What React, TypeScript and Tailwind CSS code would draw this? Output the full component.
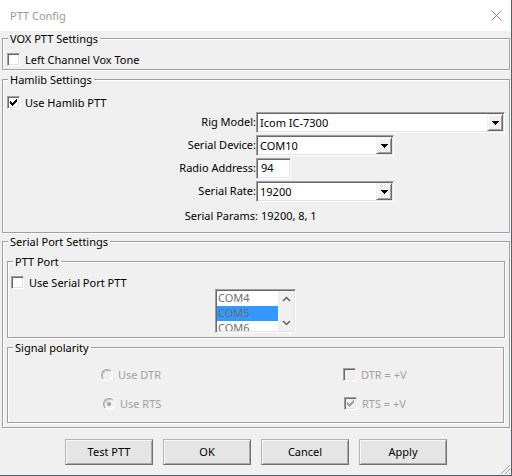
import React from "react";

const sunken =
  "border border-t-[#a0a0a0] border-l-[#a0a0a0] border-r-white border-b-white shadow-[inset_1px_1px_0_#696969,inset_-1px_-1px_0_#e3e3e3]";

function Group({
  label,
  className,
  children,
}: {
  label: string;
  className: string;
  children?: React.ReactNode;
}) {
  return (
    <div
      className={
        "relative border border-[#a0a0a0] shadow-[inset_1px_1px_0_#ffffff,1px_1px_0_#ffffff] " +
        className
      }
    >
      <span className="absolute left-[5px] top-[-8px] px-[2px] bg-[#f0f0f0] leading-[16px] whitespace-nowrap text-black">
        {label}
      </span>
      {children}
    </div>
  );
}

const checkPixels: [number, number, number][] = [
  [6, 0, 1],
  [5, 1, 2],
  [0, 2, 1],
  [4, 2, 3],
  [0, 3, 2],
  [3, 3, 3],
  [0, 4, 5],
  [1, 5, 3],
  [2, 6, 1],
];

function Check({ checked = false, disabled = false }: { checked?: boolean; disabled?: boolean }) {
  return (
    <span
      className={`relative block w-[13px] h-[13px] shrink-0 ${sunken} ${
        disabled ? "bg-[#f0f0f0]" : "bg-white"
      }`}
    >
      {checked && (
        <svg
          className="absolute left-[2px] top-[2px]"
          width="7"
          height="7"
          viewBox="0 0 7 7"
          shapeRendering="crispEdges"
        >
          {checkPixels.map(([x, y, w], i) => (
            <rect key={i} x={x} y={y} width={w} height={1} fill={disabled ? "#a0a0a0" : "#000000"} />
          ))}
        </svg>
      )}
    </span>
  );
}

function Radio({ checked = false }: { checked?: boolean }) {
  return (
    <span className="relative block w-[12px] h-[12px] shrink-0 rounded-full border border-t-[#a0a0a0] border-l-[#a0a0a0] border-r-white border-b-white shadow-[inset_1px_1px_0_#c4c4c4] bg-[#f0f0f0]">
      {checked && (
        <span className="absolute left-[3px] top-[3px] w-[4px] h-[4px] rounded-full bg-[#a0a0a0]" />
      )}
    </span>
  );
}

function DropButton() {
  return (
    <div className="w-[16px] h-full flex items-center justify-center bg-[#f0f0f0] border border-t-[#f0f0f0] border-l-[#f0f0f0] border-r-[#696969] border-b-[#696969] shadow-[inset_1px_1px_0_#ffffff,inset_-1px_-1px_0_#a0a0a0]">
      <svg width="7" height="4" viewBox="0 0 7 4" shapeRendering="crispEdges">
        <rect x="0" y="0" width="7" height="1" fill="#000" />
        <rect x="1" y="1" width="5" height="1" fill="#000" />
        <rect x="2" y="2" width="3" height="1" fill="#000" />
        <rect x="3" y="3" width="1" height="1" fill="#000" />
      </svg>
    </div>
  );
}

function Combo({ width, value }: { width: string; value: string }) {
  return (
    <div className={`flex h-[21px] p-[1px] bg-white ${sunken} ${width}`}>
      <div className="flex-1 flex items-center pl-[2px] leading-none">{value}</div>
      <DropButton />
    </div>
  );
}

function FieldRow({ label, children }: { label: string; children: React.ReactNode }) {
  return (
    <div className="flex items-center h-[21px] mt-[2px]">
      <div className="w-[253px] text-right whitespace-nowrap">{label}</div>
      {children}
    </div>
  );
}

function Button({ label }: { label: string }) {
  return (
    <div className="w-[88px] h-[26px] flex items-center justify-center bg-[#e5e5e5] border border-t-[#b4b4b4] border-l-[#b4b4b4] border-r-[#707070] border-b-[#707070] shadow-[inset_1px_1px_0_#f8f8f8,inset_-1px_-1px_0_#a8a8a8]">
      {label}
    </div>
  );
}

function ChevUp() {
  return (
    <svg width="9" height="6" viewBox="0 0 9 6">
      <path d="M1 5 L4.5 1.5 L8 5" fill="none" stroke="#606060" strokeWidth="1.5" />
    </svg>
  );
}
function ChevDown() {
  return (
    <svg width="9" height="6" viewBox="0 0 9 6">
      <path d="M1 1 L4.5 4.5 L8 1" fill="none" stroke="#606060" strokeWidth="1.5" />
    </svg>
  );
}

export default function App() {
  return (
    <div className="relative w-[512px] h-[476px] flex flex-col bg-[#f0f0f0] border-r border-b border-[#4b6373] overflow-hidden font-['Noto_Sans',sans-serif] text-[11px] text-black">
      {/* Title bar */}
      <div className="h-[31px] shrink-0 bg-white flex items-center pl-[10px] pr-[9px]">
        <span className="text-[#999999] leading-none">PTT Config</span>
        <svg className="ml-auto" width="11" height="11" viewBox="0 0 11 11">
          <path d="M0.5 0.5 L10.5 10.5 M10.5 0.5 L0.5 10.5" stroke="#8a8a8a" strokeWidth="1" />
        </svg>
      </div>

      <div className="flex flex-col pl-[2px] pr-[1px]">
        {/* VOX */}
        <Group label="VOX PTT Settings" className="mt-[7px] h-[32px]">
          <div className="flex items-center gap-[5px] ml-[4px] mt-[14px] h-[13px]">
            <Check />
            <span className="leading-none">Left Channel Vox Tone</span>
          </div>
        </Group>

        {/* Hamlib */}
        <Group label="Hamlib Settings" className="mt-[9px] h-[154px]">
          <div className="flex items-center gap-[5px] ml-[4px] mt-[16px] h-[13px]">
            <Check checked />
            <span className="leading-none">Use Hamlib PTT</span>
          </div>
          <div className="mt-[3px]">
            <FieldRow label="Rig Model:">
              <Combo width="w-[249px]" value="Icom IC-7300" />
            </FieldRow>
            <FieldRow label="Serial Device:">
              <Combo width="w-[138px]" value="COM10" />
            </FieldRow>
            <FieldRow label="Radio Address:">
              <div className={`w-[35px] h-[21px] bg-white flex items-center pl-[4px] ${sunken}`}>94</div>
            </FieldRow>
            <FieldRow label="Serial Rate:">
              <Combo width="w-[138px]" value="19200" />
            </FieldRow>
            <div className="flex items-center h-[16px] mt-[6px]">
              <div className="w-[255px] text-right whitespace-nowrap">Serial Params:</div>
              <span className="pl-[3px]">19200, 8, 1</span>
            </div>
          </div>
        </Group>

        {/* Serial port */}
        <Group label="Serial Port Settings" className="mt-[8px] h-[187px]">
          <Group label="PTT Port" className="mt-[19px] mx-[4px] h-[77px]">
            <div className="flex items-center gap-[5px] ml-[3px] mt-[14px] h-[13px]">
              <Check />
              <span className="leading-none">Use Serial Port PTT</span>
            </div>
            <div className={`ml-[207px] w-[81px] h-[44px] bg-white p-[1px] flex ${sunken}`}>
              <div className="flex-1 overflow-hidden text-[#6d6d6d]">
                <div className="h-[15px] flex items-center pl-[1px]">COM4</div>
                <div className="h-[15px] flex items-center pl-[1px] bg-[#3399ff]">COM5</div>
                <div className="h-[15px] flex items-center pl-[1px]">COM6</div>
              </div>
              <div className="w-[16px] bg-[#f0f0f0] flex flex-col items-center justify-between py-[5px]">
                <ChevUp />
                <ChevDown />
              </div>
            </div>
          </Group>

          <Group label="Signal polarity" className="mt-[9px] ml-[4px] mr-[5px] h-[76px]">
            <div className="text-[#a0a0a0]">
              <div className="flex items-center h-[13px] mt-[20px]">
                <div className="w-[335px] pl-[93px] flex items-center gap-[5px]">
                  <Radio />
                  <span className="leading-none">Use DTR</span>
                </div>
                <div className="flex items-center gap-[5px]">
                  <Check disabled />
                  <span className="leading-none">DTR = +V</span>
                </div>
              </div>
              <div className="flex items-center h-[13px] mt-[16px]">
                <div className="w-[336px] pl-[95px] flex items-center gap-[5px]">
                  <Radio checked />
                  <span className="leading-none">Use RTS</span>
                </div>
                <div className="flex items-center gap-[5px]">
                  <Check checked disabled />
                  <span className="leading-none">RTS = +V</span>
                </div>
              </div>
            </div>
          </Group>
        </Group>

        {/* Buttons */}
        <div className="flex gap-[10px] pl-[63px] mt-[11px]">
          <Button label="Test PTT" />
          <Button label="OK" />
          <Button label="Cancel" />
          <Button label="Apply" />
        </div>
      </div>

      {/* size grip */}
      <svg className="absolute right-0 bottom-0" width="12" height="12" viewBox="0 0 12 12">
        <path d="M11 2 L2 11 M11 6 L6 11 M11 10 L10 11" stroke="#a0a0a0" strokeWidth="1" />
        <path d="M12 3 L3 12 M12 7 L7 12" stroke="#ffffff" strokeWidth="1" />
      </svg>
    </div>
  );
}
